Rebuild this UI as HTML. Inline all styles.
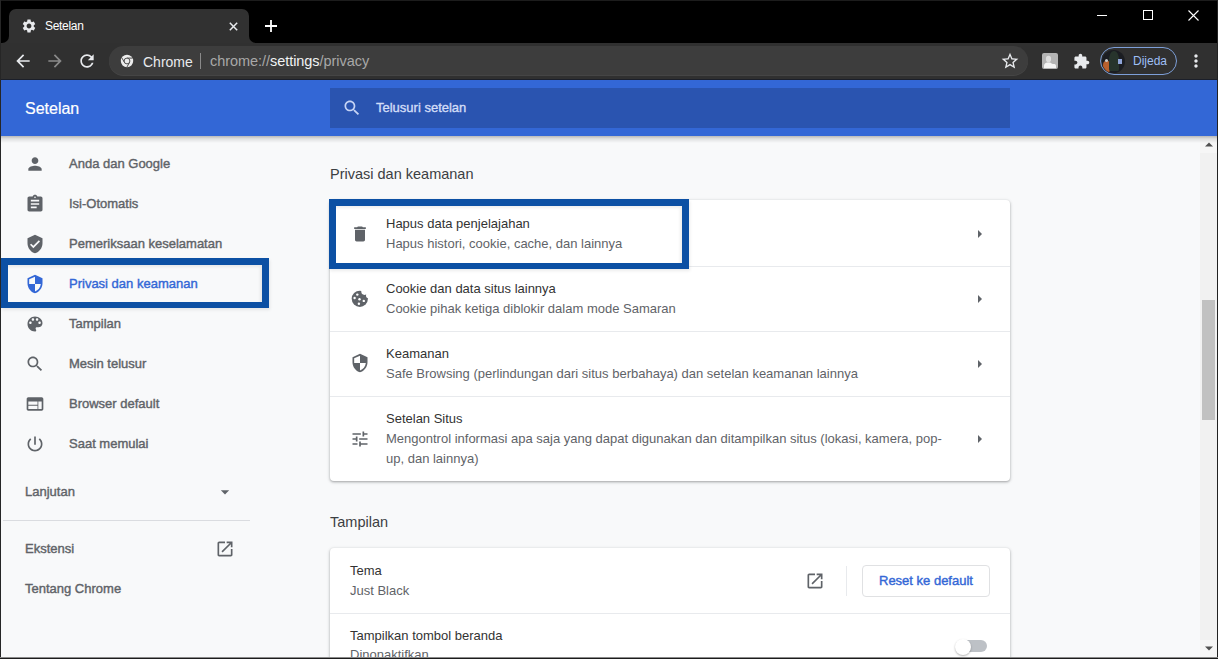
<!DOCTYPE html>
<html><head><meta charset="utf-8">
<style>
*{margin:0;padding:0;box-sizing:border-box}
html,body{width:1218px;height:659px;overflow:hidden;background:#f8f9fa;font-family:"Liberation Sans",sans-serif}
.a{position:absolute}
svg{display:block}
#frame{left:0;top:0;width:1218px;height:43px;background:#000}
#tab{left:9px;top:9px;width:240px;height:34px;background:#313131;border-radius:7px 7px 0 0}
#toolbar{left:0;top:43px;width:1218px;height:37px;background:#303030;border-bottom:1px solid #1b1f2a}
#omni{left:109px;top:46px;width:919px;height:29px;background:#3d3d3d;border-radius:15px;box-shadow:0 1px 0 #454545}
#hdr{left:0;top:80px;width:1218px;height:56px;background:#3367d6}
#search{left:330px;top:88px;width:680px;height:40px;background:#2a54b0}
.side{left:69px;color:#5f6368;font-size:13px;white-space:nowrap;-webkit-text-stroke:0.4px #5f6368}
.ic{width:20px;height:20px;fill:#5f6368}
.card{left:330px;width:680px;background:#fff;border-radius:4px;box-shadow:0 1px 2px rgba(60,64,67,.3),0 1px 3px 1px rgba(60,64,67,.15)}
.sep{left:330px;width:680px;height:1px;background:#e8eaed}
.prim{color:#333;font-size:13px;white-space:nowrap}
.sec{color:#5f6368;font-size:13px;white-space:nowrap}
.arr{left:978px;width:0;height:0;border-top:4.5px solid transparent;border-bottom:4.5px solid transparent;border-left:4.5px solid #5f6368}
.head{left:330px;color:#3c4043;font-size:14.5px;white-space:nowrap}
#lb{left:0;top:0;width:1px;height:659px;background:#262626}
#rb{left:1217px;top:0;width:1px;height:659px;background:#222}
#bb{left:0;top:657px;width:1218px;height:2px;background:#1c1c1c;border-top:1px solid #8a8a8a}
.hl{border:7px solid #0c50a4;border-bottom-width:6px;box-shadow:inset -2px 2px 3px rgba(0,0,0,.07),1px 2px 3px rgba(0,0,0,.08)}
</style></head><body>
<div class="a" id="frame"></div>
<div class="a" id="tab"></div>
<div class="a" style="left:1px;top:35px;width:8px;height:8px;background:#313131"></div><div class="a" style="left:1px;top:34px;width:8px;height:9px;background:#000;border-bottom-right-radius:7px"></div>
<div class="a" style="left:249px;top:35px;width:8px;height:8px;background:#313131"></div><div class="a" style="left:249px;top:34px;width:8px;height:9px;background:#000;border-bottom-left-radius:7px"></div>
<div class="a" style="left:0;top:0;width:1218px;height:1px;background:#1c1c1c"></div>
<div class="a" id="toolbar"></div>
<div class="a" id="omni"></div>
<div class="a" id="hdr"></div>
<div class="a" id="search"></div>

<!-- tab content -->
<svg class="a" style="left:21px;top:18px" width="16" height="16" viewBox="0 0 24 24" fill="#e8eaed"><path d="M19.14 12.94c.04-.3.06-.61.06-.94 0-.32-.02-.64-.07-.94l2.03-1.58c.18-.14.23-.41.12-.61l-1.92-3.32c-.12-.22-.37-.29-.59-.22l-2.39.96c-.5-.38-1.030-.7-1.62-.94l-.36-2.54c-.04-.24-.24-.41-.48-.41h-3.84c-.24 0-.43.17-.47.41l-.36 2.54c-.59.24-1.13.57-1.62.94l-2.39-.96c-.22-.08-.47 0-.59.22L2.74 8.87c-.12.21-.08.47.12.61l2.03 1.58c-.05.3-.09.63-.09.94s.02.64.07.94l-2.03 1.58c-.18.14-.23.41-.12.61l1.92 3.320c.12.22.37.29.59.22l2.39-.96c.5.38 1.03.7 1.62.94l.36 2.54c.05.24.24.41.48.41h3.84c.24 0 .44-.17.47-.41l.36-2.54c.59-.24 1.13-.56 1.62-.94l2.39.96c.22.08.47 0 .59-.22l1.92-3.32c.12-.22.07-.47-.12-.61l-2.01-1.58zM12 15.6c-1.98 0-3.6-1.62-3.6-3.6s1.62-3.6 3.6-3.6 3.6 1.62 3.6 3.6-1.62 3.6-3.6 3.6z"/></svg>
<div class="a" style="left:45px;top:19px;color:#fff;font-size:12px;letter-spacing:-0.3px;white-space:nowrap">Setelan</div>
<svg class="a" style="left:229px;top:22px" width="9" height="9" viewBox="0 0 9 9"><path d="M0.8 0.8L8.2 8.2M8.2 0.8L0.8 8.2" stroke="#e8eaed" stroke-width="1.5"/></svg>
<svg class="a" style="left:265px;top:20px" width="12" height="12" viewBox="0 0 12 12"><path d="M6 0V12M0 6H12" stroke="#fff" stroke-width="1.8"/></svg>

<!-- window controls -->
<div class="a" style="left:1097px;top:15px;width:10px;height:1px;background:#fff"></div>
<div class="a" style="left:1143px;top:10px;width:10px;height:10px;border:1px solid #fff"></div>
<svg class="a" style="left:1188px;top:10px" width="11" height="11" viewBox="0 0 11 11"><path d="M0.5 0.5L10.5 10.5M10.5 0.5L0.5 10.5" stroke="#fff" stroke-width="1.1"/></svg>

<!-- toolbar icons -->
<svg class="a" style="left:13px;top:51px" width="20" height="20" viewBox="0 0 24 24" fill="#e8eaed"><path d="M20 11H7.83l5.59-5.59L12 4l-8 8 8 8 1.41-1.41L7.83 13H20v-2z"/></svg>
<svg class="a" style="left:45px;top:51px" width="20" height="20" viewBox="0 0 24 24" fill="#8a8a8a"><path d="M12 4l-1.41 1.41L16.17 11H4v2h12.17l-5.58 5.59L12 20l8-8z"/></svg>
<svg class="a" style="left:77px;top:51px" width="20" height="20" viewBox="0 0 24 24" fill="#e8eaed"><path d="M17.65 6.35C16.2 4.9 14.21 4 12 4c-4.42 0-7.99 3.58-7.990 8s3.57 8 7.99 8c3.73 0 6.84-2.55 7.73-6h-2.08c-.82 2.33-3.04 4-5.65 4-3.31 0-6-2.69-6-6s2.69-6 6-6c1.66 0 3.14.69 4.22 1.78L13 11h7V4l-2.35 2.35z"/></svg>
<!-- omnibox -->
<svg class="a" style="left:120px;top:54px" width="14" height="14" viewBox="0 0 14 14"><circle cx="7" cy="7" r="6.2" fill="#ececec"/><path d="M7 4.1H12.6M9.51 8.45L6.77 13.3M4.49 8.45L1.7 3.65" stroke="#3d3d3d" stroke-width="0.9"/><circle cx="7" cy="7" r="2.9" fill="#ececec" stroke="#3d3d3d" stroke-width="0.9"/></svg>
<div class="a" style="left:143px;top:54px;color:#e8eaed;font-size:14px;white-space:nowrap">Chrome</div>
<div class="a" style="left:200px;top:53px;width:1px;height:16px;background:#8a8a8a"></div>
<div class="a" style="left:210px;top:53px;color:#a8a8a8;font-size:14.5px;letter-spacing:-0.05px;white-space:nowrap">chrome://<span style="color:#f1f3f4">settings</span>/privacy</div>
<svg class="a" style="left:1000px;top:51px" width="20" height="20" viewBox="0 0 24 24" fill="#e8eaed"><path d="M22 9.24l-7.19-.62L12 2 9.19 8.63 2 9.24l5.46 4.73L5.82 21 12 17.27 18.18 21l-1.63-7.03L22 9.240zM12 15.4l-3.76 2.27 1-4.28-3.32-2.88 4.38-.38L12 6.1l1.71 4.04 4.38.38-3.32 2.88 1 4.28L12 15.4z"/></svg>
<!-- ext icons -->
<svg class="a" style="left:1042px;top:53px" width="16" height="16" viewBox="0 0 16 16"><rect x="0" y="0" width="16" height="16" rx="2" fill="#b4b4b4"/><ellipse cx="6.5" cy="6" rx="2.6" ry="3.2" fill="#dedede"/><path d="M2 15V12.5C2 11 3.5 9.5 5.5 9.5H8C9 9.5 9.5 11 11 11H12.5C13.5 11 14 12 14 13V15z" fill="#f4f4f4"/></svg>
<svg class="a" style="left:1073px;top:53px" width="17" height="17" viewBox="0 0 24 24" fill="#e8eaed"><path d="M20.5 11H19V7c0-1.1-.9-2-2-2h-4V3.5C13 2.12 11.88 1 10.5 1S8 2.12 8 3.5V5H4c-1.1 0-1.99.9-1.990 2v3.8H3.5c1.49 0 2.7 1.21 2.7 2.7s-1.21 2.7-2.7 2.7H2V20c0 1.1.9 2 2 2h3.8v-1.5c0-1.49 1.21-2.7 2.7-2.7 1.49 0 2.7 1.21 2.7 2.7V22H17c1.1 0 2-.9 2-2v-4h1.5c1.38 0 2.5-1.12 2.5-2.5S21.88 11 20.5 11z"/></svg>
<div class="a" style="left:1100px;top:47px;width:77px;height:28px;border:1px solid #7d9fd8;border-radius:14px"></div>
<div class="a" style="left:1102px;top:50px;width:23px;height:23px;border-radius:50%;background:#1b1d22;overflow:hidden"><div class="a" style="left:1px;top:11px;width:8px;height:11px;background:#b8602e;border-radius:40%"></div><div class="a" style="left:7px;top:1px;width:10px;height:20px;background:#27342c;border-radius:45% 45% 10% 10%"></div><div class="a" style="left:16px;top:9px;width:4px;height:5px;background:#8fa4d8"></div><div class="a" style="left:3px;top:9px;width:3px;height:3px;background:#c9c9c9;border-radius:50%"></div></div>
<div class="a" style="left:1133px;top:54px;color:#9ebff5;font-size:12px;white-space:nowrap">Dijeda</div>
<svg class="a" style="left:1186px;top:51px" width="20" height="20" viewBox="0 0 24 24" fill="#e8eaed"><path d="M12 8c1.1 0 2-.9 2-2s-.9-2-2-2-2 .9-2 2 .9 2 2 2zm0 2c-1.1 0-2 .9-2 2s.9 2 2 2 2-.9 2-2-.9-2-2-2zm0 6c-1.1 0-2 .9-2 2s.9 2 2 2 2-.9 2-2-.9-2-2-2z"/></svg>

<!-- header -->
<div class="a" style="left:25px;top:100px;color:#fff;font-size:16px;white-space:nowrap;-webkit-text-stroke:0.2px #fff">Setelan</div>
<svg class="a" style="left:342px;top:98px" width="20" height="20" viewBox="0 0 24 24" fill="#c6d4f5"><path d="M15.5 14h-.79l-.28-.27C15.41 12.59 16 11.11 16 9.5 16 5.91 13.09 3 9.5 3S3 5.910 3 9.5 5.91 16 9.5 16c1.61 0 3.09-.59 4.23-1.57l.27.28v.79l5 4.99L20.49 19l-4.99-5zm-6 0C7.01 14 5 11.99 5 9.5S7.01 5 9.5 5 14 7.01 14 9.5 11.99 14 9.5 14z"/></svg>
<div class="a" style="left:376px;top:100px;color:#d2ddf7;font-size:13px;white-space:nowrap;-webkit-text-stroke:0.35px #d2ddf7">Telusuri setelan</div>

<!-- sidebar icons -->
<svg class="a ic" style="left:25px;top:154px" viewBox="0 0 24 24"><path d="M12 12c2.21 0 4-1.79 4-4s-1.79-4-4-4-4 1.79-4 4 1.79 4 4 4zm0 2c-2.67 0-8 1.34-8 4v2h16v-2c0-2.66-5.33-4-8-4z"/></svg>
<svg class="a ic" style="left:25px;top:194px" viewBox="0 0 24 24"><path d="M19 3h-4.18C14.4 1.84 13.3 1 12 1c-1.3 0-2.4.84-2.82 2H5c-1.1 0-2 .9-2 2v14c0 1.1.9 2 2 2h14c1.1 0 2-.9 2-2V5c0-1.1-.9-2-2-2zm-7 0c.55 0 1 .45 1 1s-.45 1-1 1-1-.45-1-1 .45-1 1-1zm2 14H7v-2h7v2zm3-4H7v-2h10v2zm0-4H7V7h10v2z"/></svg>
<svg class="a ic" style="left:25px;top:234px" viewBox="0 0 24 24"><path d="M12 1L3 5v6c0 5.55 3.84 10.74 9 12 5.16-1.26 9-6.45 9-12V5l-9-4zm-2 16l-4-4 1.41-1.41L10 14.17l6.59-6.59L18 9l-8 8z"/></svg>
<svg class="a ic" style="left:25px;top:274px;fill:#3367d6" viewBox="0 0 24 24"><path d="M12 1L3 5v6c0 5.55 3.84 10.74 9 12 5.16-1.26 9-6.45 9-12V5l-9-4zm0 10.99h7c-.53 4.12-3.28 7.79-7 8.94V12H5V6.3l7-3.11v8.8z"/></svg>
<svg class="a ic" style="left:25px;top:314px" viewBox="0 0 24 24"><path d="M12 3c-4.97 0-9 4.03-9 9s4.03 9 9 9c.83 0 1.5-.67 1.5-1.5 0-.39-.15-.74-.39-1.01-.23-.26-.38-.61-.38-.99 0-.83.67-1.5 1.5-1.5H16c2.76 0 5-2.24 5-5 0-4.42-4.03-8-9-8zm-5.5 9c-.83 0-1.5-.67-1.5-1.5S5.67 9 6.5 9 8 9.67 8 10.5 7.33 12 6.5 12zm3-4C8.67 8 8 7.33 8 6.5S8.67 5 9.5 5s1.5.67 1.5 1.5S10.33 8 9.5 8zm5 0c-.83 0-1.5-.67-1.5-1.5S13.67 5 14.5 5s1.5.67 1.5 1.5S15.33 8 14.5 8zm3 4c-.83 0-1.5-.67-1.5-1.5S16.67 9 17.5 9s1.5.67 1.5 1.5-.67 1.5-1.5 1.5z"/></svg>
<svg class="a ic" style="left:25px;top:354px" viewBox="0 0 24 24"><path d="M15.5 14h-.79l-.28-.27C15.41 12.59 16 11.11 16 9.5 16 5.91 13.09 3 9.5 3S3 5.91 3 9.5 5.91 16 9.5 16c1.61 0 3.09-.59 4.23-1.57l.27.28v.79l5 4.99L20.49 19l-4.99-5zm-6 0C7.01 14 5 11.99 5 9.5S7.01 5 9.5 5 14 7.01 14 9.5 11.99 14 9.5 14z"/></svg>
<svg class="a ic" style="left:25px;top:394px" viewBox="0 0 24 24"><path d="M20 4H4c-1.1 0-1.99.9-1.99 2L2 18c0 1.1.9 2 2 2h16c1.1 0 2-.9 2-2V6c0-1.1-.9-2-2-2zm-5 14H4v-4h11v4zm0-5H4V9h11v4zm5 5h-4V9h4v9z"/></svg>
<svg class="a ic" style="left:25px;top:434px" viewBox="0 0 24 24"><path d="M13 3h-2v10h2V3zm4.83 2.17l-1.42 1.42C17.99 7.86 19 9.81 19 12c0 3.870-3.13 7-7 7s-7-3.13-7-7c0-2.19 1.01-4.14 2.58-5.42L6.17 5.17C4.23 6.82 3 9.26 3 12c0 4.97 4.03 9 9 9s9-4.03 9-9c0-2.74-1.23-5.18-3.17-6.83z"/></svg>

<!-- sidebar -->
<div class="a side" style="top:156px">Anda dan Google</div>
<div class="a side" style="top:196px">Isi-Otomatis</div>
<div class="a side" style="top:236px">Pemeriksaan keselamatan</div>
<div class="a side" style="top:276px;color:#3367d6;-webkit-text-stroke:0.4px #3367d6">Privasi dan keamanan</div>
<div class="a side" style="top:316px">Tampilan</div>
<div class="a side" style="top:356px">Mesin telusur</div>
<div class="a side" style="top:396px">Browser default</div>
<div class="a side" style="top:436px">Saat memulai</div>
<div class="a side" style="left:25px;top:484px">Lanjutan</div>
<svg class="a ic" style="left:215px;top:482px" viewBox="0 0 24 24"><path d="M7 10l5 5 5-5z"/></svg>
<div class="a" style="left:3px;top:520px;width:247px;height:1px;background:#dadce0"></div>
<div class="a side" style="left:25px;top:541px">Ekstensi</div>
<svg class="a ic" style="left:215px;top:539px" viewBox="0 0 24 24"><path d="M19 19H5V5h7V3H5c-1.11 0-2 .9-2 2v14c0 1.1.89 2 2 2h14c1.1 0 2-.9 2-2v-7h-2v7zM14 3v2h3.59l-9.83 9.83 1.41 1.41L19 6.41V10h2V3h-7z"/></svg>
<div class="a side" style="left:25px;top:581px">Tentang Chrome</div>

<!-- main -->
<div class="a head" style="top:166px">Privasi dan keamanan</div>
<div class="a card" style="top:200px;height:281px"></div>
<div class="a sep" style="top:266px"></div>
<div class="a sep" style="top:331px"></div>
<div class="a sep" style="top:396px"></div>

<svg class="a ic" style="left:350px;top:224px" viewBox="0 0 24 24"><path d="M6 19c0 1.1.9 2 2 2h8c1.1 0 2-.9 2-2V7H6v12zM19 4h-3.5l-1-1h-5l-1 1H5v2h14V4z"/></svg>
<div class="a prim" style="left:386px;top:216px">Hapus data penjelajahan</div>
<div class="a sec" style="left:386px;top:236px">Hapus histori, cookie, cache, dan lainnya</div>
<div class="a arr" style="top:229.5px"></div>

<svg class="a" style="left:348px;top:286px" width="24" height="24" viewBox="0 0 24 24"><defs><mask id="ck"><rect width="24" height="24" fill="#fff"/><circle cx="16.6" cy="5.6" r="3.3" fill="#000"/><circle cx="20.6" cy="9.6" r="2.6" fill="#000"/><circle cx="9.3" cy="8.6" r="1.2" fill="#000"/><circle cx="6.6" cy="12" r="1.2" fill="#000"/><circle cx="11.5" cy="13.3" r="1.2" fill="#000"/><circle cx="15.8" cy="14.9" r="1.2" fill="#000"/><circle cx="10.9" cy="17.8" r="1.2" fill="#000"/></mask></defs><circle cx="11.8" cy="12.8" r="8.1" fill="#5f6368" mask="url(#ck)"/></svg>
<div class="a prim" style="left:386px;top:281px">Cookie dan data situs lainnya</div>
<div class="a sec" style="left:386px;top:301px">Cookie pihak ketiga diblokir dalam mode Samaran</div>
<div class="a arr" style="top:294.5px"></div>

<svg class="a ic" style="left:350px;top:353px" viewBox="0 0 24 24"><path d="M12 1L3 5v6c0 5.55 3.84 10.74 9 12 5.16-1.26 9-6.45 9-12V5l-9-4zm0 10.99h7c-.53 4.12-3.28 7.79-7 8.94V12H5V6.3l7-3.11v8.8z"/></svg>
<div class="a prim" style="left:386px;top:346px">Keamanan</div>
<div class="a sec" style="left:386px;top:366px">Safe Browsing (perlindungan dari situs berbahaya) dan setelan keamanan lainnya</div>
<div class="a arr" style="top:359.5px"></div>

<svg class="a ic" style="left:350px;top:429px" viewBox="0 0 24 24"><path d="M3 17v2h6v-2H3zM3 5v2h10V5H3zm10 16v-2h8v-2h-8v-2h-2v6h2zM7 9v2H3v2h4v2h2V9H7zm14 4v-2H11v2h10zm-6-4h2V7h4V5h-4V3h-2v6z"/></svg>
<div class="a prim" style="left:386px;top:411px">Setelan Situs</div>
<div class="a sec" style="left:386px;top:431px">Mengontrol informasi apa saja yang dapat digunakan dan ditampilkan situs (lokasi, kamera, pop-</div>
<div class="a sec" style="left:386px;top:451px">up, dan lainnya)</div>
<div class="a arr" style="top:434.5px"></div>

<!-- highlight boxes -->
<div class="a hl" style="left:1px;top:258px;width:268px;height:50px"></div>
<div class="a hl" style="left:329px;top:199px;width:360px;height:70px"></div>

<div class="a head" style="top:514px">Tampilan</div>
<div class="a card" style="top:548px;height:140px"></div>
<div class="a prim" style="left:350px;top:563px">Tema</div>
<div class="a sec" style="left:350px;top:583px">Just Black</div>
<svg class="a ic" style="left:805px;top:571px" viewBox="0 0 24 24"><path d="M19 19H5V5h7V3H5c-1.11 0-2 .9-2 2v14c0 1.1.89 2 2 2h14c1.1 0 2-.9 2-2v-7h-2v7zM14 3v2h3.59l-9.83 9.83 1.41 1.41L19 6.41V10h2V3h-7z"/></svg>
<div class="a" style="left:846px;top:566px;width:1px;height:30px;background:#e8eaed"></div>
<div class="a" style="left:862px;top:565px;width:128px;height:32px;border:1px solid #e0e1e3;border-radius:4px;background:#fff"></div>
<div class="a" style="left:879px;top:573px;color:#3367d6;font-size:13px;white-space:nowrap;-webkit-text-stroke:0.4px #3367d6">Reset ke default</div>
<div class="a sep" style="top:613px"></div>
<div class="a prim" style="left:350px;top:628px">Tampilkan tombol beranda</div>
<div class="a sec" style="left:350px;top:647px">Dinonaktifkan</div>
<div class="a" style="left:958px;top:640px;width:29px;height:12px;border-radius:6px;background:#bdc1c6"></div>
<div class="a" style="left:955px;top:639px;width:16px;height:16px;border-radius:50%;background:#fff;box-shadow:0 1px 2px rgba(0,0,0,.3)"></div>

<!-- scrollbar -->
<div class="a" style="left:1200px;top:136px;width:17px;height:521px;background:#f1f1f1"></div>
<div class="a" style="left:1200px;top:136px;width:17px;height:17px;background:#f6f6f6"></div>
<div class="a" style="left:1200px;top:640px;width:17px;height:17px;background:#f6f6f6"></div>
<div class="a" style="left:1202px;top:300px;width:13px;height:120px;background:#c1c1c1"></div>
<svg class="a" style="left:1205px;top:142px" width="8" height="5" viewBox="0 0 8 5"><path d="M0 4.5L4 0.5L8 4.5z" fill="#505050"/></svg>
<svg class="a" style="left:1205px;top:646px" width="8" height="5" viewBox="0 0 8 5"><path d="M0 0.5L4 4.5L8 0.5z" fill="#505050"/></svg>
<!-- header shadow -->
<div class="a" style="left:0;top:136px;width:1218px;height:7px;background:linear-gradient(rgba(0,0,0,.26),rgba(0,0,0,.1) 40%,rgba(0,0,0,0))"></div>

<div class="a" id="lb"></div>
<div class="a" id="rb"></div>
<div class="a" id="bb"></div>
</body></html>
